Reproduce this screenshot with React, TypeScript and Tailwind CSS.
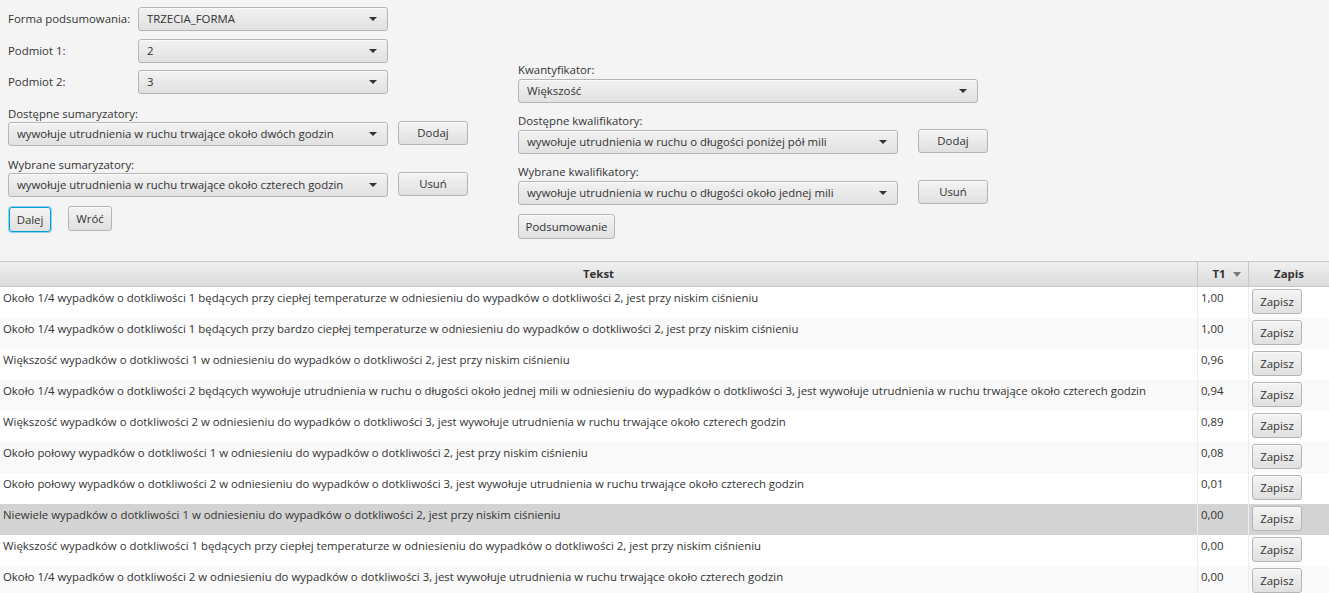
import type { ReactNode } from 'react';

const FONT = "font-['Open_Sans','Noto_Sans',sans-serif]";

const rows: { text: string; t1: string; selected?: boolean }[] = [
  { text: 'Około 1/4 wypadków o dotkliwości 1 będących przy ciepłej temperaturze w odniesieniu do wypadków o dotkliwości 2, jest przy niskim ciśnieniu', t1: '1,00' },
  { text: 'Około 1/4 wypadków o dotkliwości 1 będących przy bardzo ciepłej temperaturze w odniesieniu do wypadków o dotkliwości 2, jest przy niskim ciśnieniu', t1: '1,00' },
  { text: 'Większość wypadków o dotkliwości 1 w odniesieniu do wypadków o dotkliwości 2, jest przy niskim ciśnieniu', t1: '0,96' },
  { text: 'Około 1/4 wypadków o dotkliwości 2 będących wywołuje utrudnienia w ruchu o długości około jednej mili w odniesieniu do wypadków o dotkliwości 3, jest wywołuje utrudnienia w ruchu trwające około czterech godzin', t1: '0,94' },
  { text: 'Większość wypadków o dotkliwości 2 w odniesieniu do wypadków o dotkliwości 3, jest wywołuje utrudnienia w ruchu trwające około czterech godzin', t1: '0,89' },
  { text: 'Około połowy wypadków o dotkliwości 1 w odniesieniu do wypadków o dotkliwości 2, jest przy niskim ciśnieniu', t1: '0,08' },
  { text: 'Około połowy wypadków o dotkliwości 2 w odniesieniu do wypadków o dotkliwości 3, jest wywołuje utrudnienia w ruchu trwające około czterech godzin', t1: '0,01' },
  { text: 'Niewiele wypadków o dotkliwości 1 w odniesieniu do wypadków o dotkliwości 2, jest przy niskim ciśnieniu', t1: '0,00', selected: true },
  { text: 'Większość wypadków o dotkliwości 1 będących przy ciepłej temperaturze w odniesieniu do wypadków o dotkliwości 2, jest przy niskim ciśnieniu', t1: '0,00' },
  { text: 'Około 1/4 wypadków o dotkliwości 2 w odniesieniu do wypadków o dotkliwości 3, jest wywołuje utrudnienia w ruchu trwające około czterech godzin', t1: '0,00' },
];

function Combo({ value, className }: { value: string; className: string }) {
  return (
    <div
      className={`h-6 flex items-center justify-between pl-2 pr-[10px] rounded-[3px] border border-[#b5b5b5] bg-linear-to-b from-[#f2f2f2] to-[#e1e1e1] shadow-[inset_0_1px_0_#fbfbfb] text-[#333] ${className}`}
    >
      <span className="truncate">{value}</span>
      <svg width="8" height="4" viewBox="0 0 8 4" className="shrink-0">
        <path d="M0 0 H8 L4 4 Z" fill="#333" />
      </svg>
    </div>
  );
}

function Btn({ children, className = '', focused = false }: { children: ReactNode; className?: string; focused?: boolean }) {
  return (
    <button
      className={`h-6 flex items-center justify-center rounded-[3px] bg-linear-to-b from-[#f4f4f4] to-[#e0e0e0] text-[#333] ${
        focused
          ? 'border border-[#039ed3] shadow-[0_0_0_1px_#8fd2ef]'
          : 'border border-[#b5b5b5] shadow-[inset_0_1px_0_#fbfbfb]'
      } ${className}`}
    >
      {children}
    </button>
  );
}

function Label({ children, className = '' }: { children: ReactNode; className?: string }) {
  return <div className={`h-4 leading-4 text-[#333] ${className}`}>{children}</div>;
}

export default function App() {
  return (
    <div className={`w-[1329px] h-[593px] overflow-hidden bg-[#f4f4f4] text-[11.4px] ${FONT}`}>
      {/* form area */}
      <div className="h-[261px] flex">
        <div className="w-[460px] ml-2 pt-[7px] flex flex-col">
          <div className="flex items-center">
            <span className="w-[130px] text-[#333]">Forma podsumowania:</span>
            <Combo value="TRZECIA_FORMA" className="w-[250px]" />
          </div>
          <div className="flex items-center mt-2">
            <span className="w-[130px] text-[#333]">Podmiot 1:</span>
            <Combo value="2" className="w-[250px]" />
          </div>
          <div className="flex items-center mt-[7px]">
            <span className="w-[130px] text-[#333]">Podmiot 2:</span>
            <Combo value="3" className="w-[250px]" />
          </div>
          <Label className="mt-3">Dostępne sumaryzatory:</Label>
          <div className="flex items-start">
            <Combo value="wywołuje utrudnienia w ruchu trwające około dwóch godzin" className="w-[380px]" />
            <Btn className="w-[70px] ml-[10px] -mt-px">Dodaj</Btn>
          </div>
          <Label className="mt-[11px]">Wybrane sumaryzatory:</Label>
          <div className="flex items-start">
            <Combo value="wywołuje utrudnienia w ruchu trwające około czterech godzin" className="w-[380px]" />
            <Btn className="w-[70px] ml-[10px] -mt-px">Usuń</Btn>
          </div>
          <div className="flex items-start mt-[10px]">
            <Btn focused className="w-[42px] h-[25px] ml-px">Dalej</Btn>
            <Btn className="w-[44px] h-[25px] ml-[17px] -mt-px">Wróć</Btn>
          </div>
        </div>

        <div className="w-[470px] ml-[50px] pt-[62px] flex flex-col">
          <Label>Kwantyfikator:</Label>
          <Combo value="Większość" className="w-[460px] mt-px" />
          <Label className="mt-[10px]">Dostępne kwalifikatory:</Label>
          <div className="flex items-start mt-px">
            <Combo value="wywołuje utrudnienia w ruchu o długości poniżej pół mili" className="w-[380px]" />
            <Btn className="w-[70px] ml-5 -mt-px">Dodaj</Btn>
          </div>
          <Label className="mt-[10px]">Wybrane kwalifikatory:</Label>
          <div className="flex items-start mt-px">
            <Combo value="wywołuje utrudnienia w ruchu o długości około jednej mili" className="w-[380px]" />
            <Btn className="w-[70px] ml-5 -mt-px">Usuń</Btn>
          </div>
          <Btn className="w-[97px] h-[25px] mt-[9px]">Podsumowanie</Btn>
        </div>
      </div>

      {/* table */}
      <div className="border-t border-[#c8c8c8] bg-white">
        <div className="flex h-[25px] border-b border-[#c8c8c8] bg-linear-to-b from-[#efefef] to-[#dcdcdc] font-bold text-[#333]">
          <div className="w-[1198px] flex items-center justify-center border-r border-[#c8c8c8]">Tekst</div>
          <div className="w-[51px] relative flex items-center justify-center border-r border-[#c8c8c8]">
            <span className="-ml-2">T1</span>
            <svg width="8" height="5" viewBox="0 0 8 5" className="absolute right-[7px] top-[10px]">
              <path d="M0 0 H8 L4 5 Z" fill="#7a7a7a" />
            </svg>
          </div>
          <div className="flex-1 flex items-center justify-center">Zapis</div>
        </div>
        {rows.map((r, i) => (
          <div
            key={i}
            className={`flex h-[31px] text-[#333] ${r.selected ? 'bg-[#d3d3d3]' : i % 2 === 0 ? 'bg-white' : 'bg-[#f9f9f9]'}`}
          >
            <div className="w-[1198px] pl-[3px] pt-[3px] leading-4 border-r border-[#ececec] whitespace-nowrap overflow-hidden">
              {r.text}
            </div>
            <div className="w-[51px] pl-[3px] pt-[3px] leading-4 border-r border-[#ececec]">{r.t1}</div>
            <div className="flex-1 pl-[3px] pt-[2px]">
              <Btn className="w-[50px] h-[25px]">Zapisz</Btn>
            </div>
          </div>
        ))}
      </div>
    </div>
  );
}
